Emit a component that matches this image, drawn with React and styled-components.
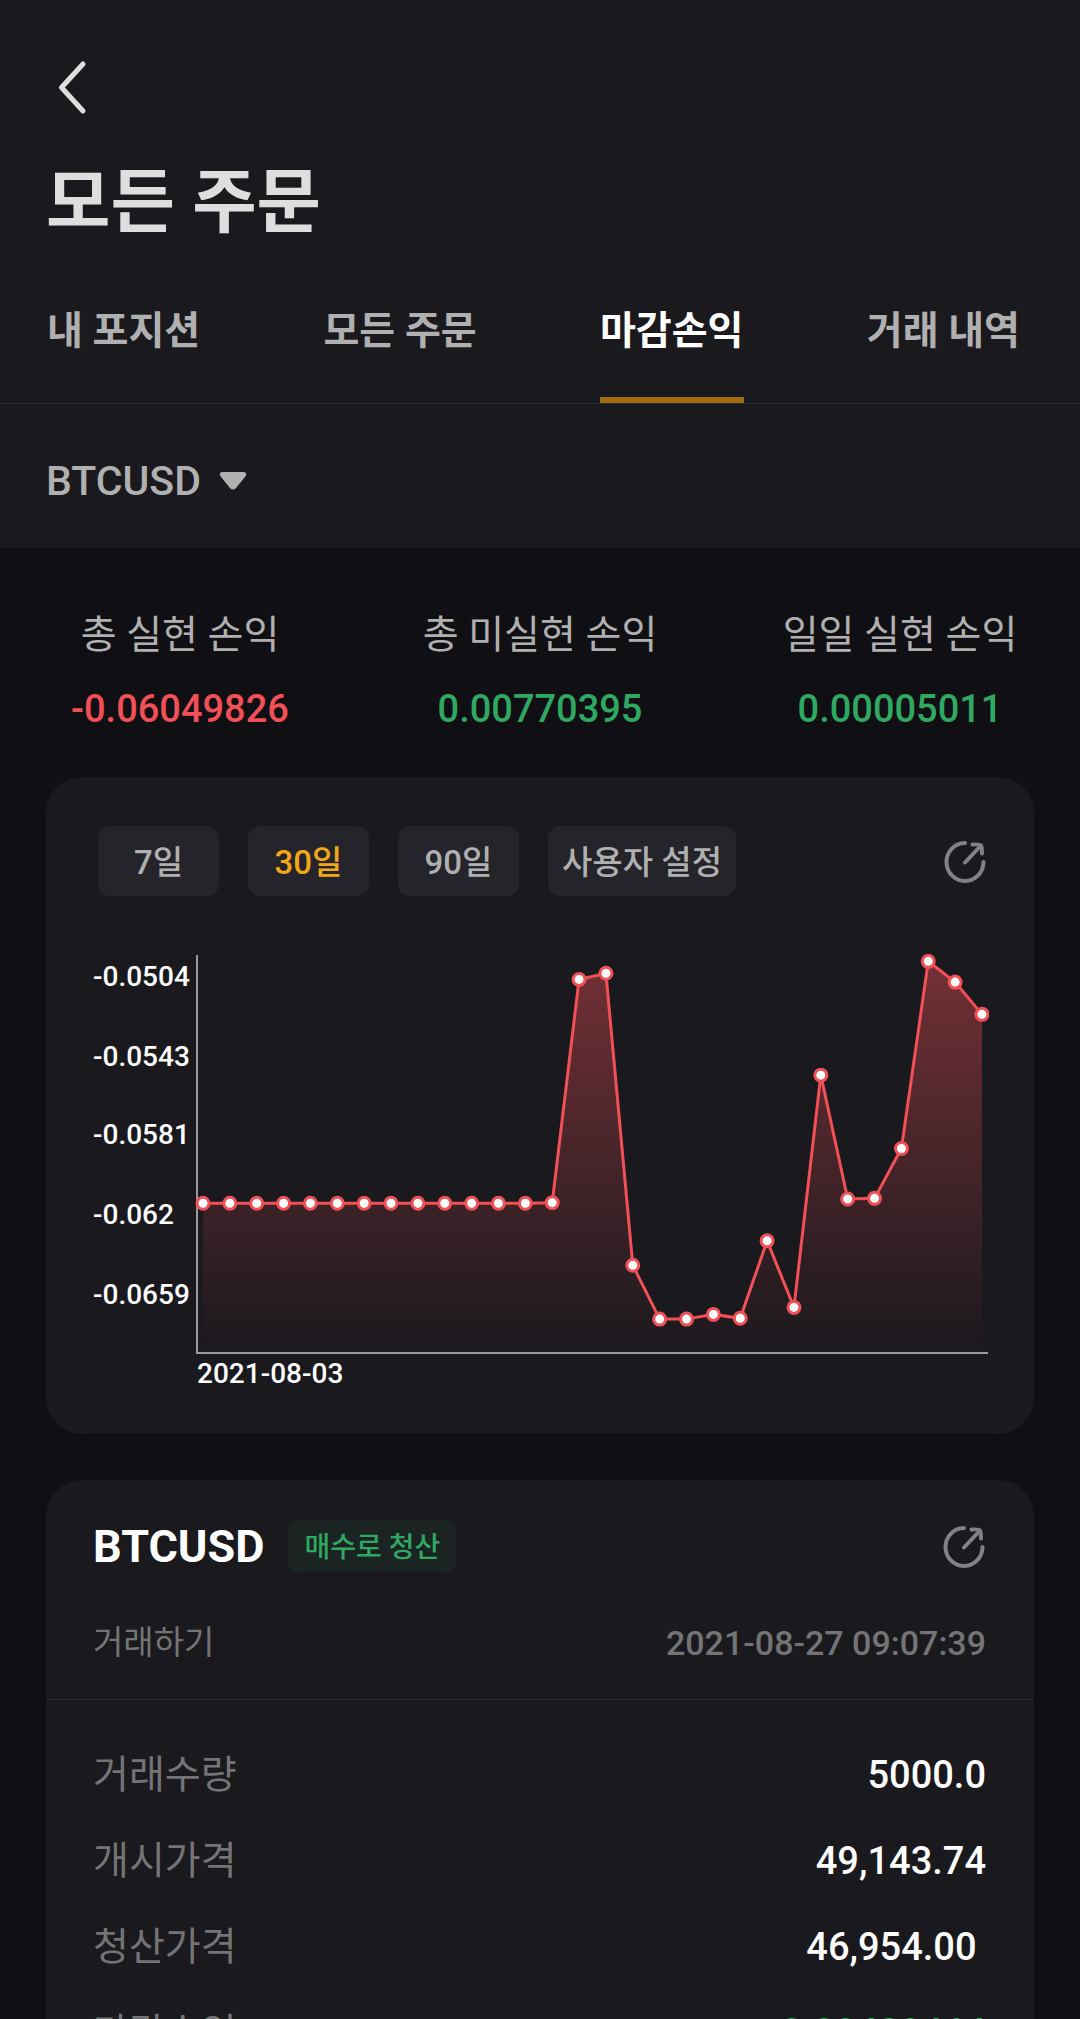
import React, { useState } from "react";
import styled, { createGlobalStyle } from "styled-components";

const Color = {
  page: "#100f14",
  panel: "#1a191e",
  chip: "#25242a",
  line: "#2a292e",
  white: "#ffffff",
  title: "#dedede",
  text: "#b0b0b0",
  muted: "#747476",
  icon: "#828284",
  red: "#f15056",
  green: "#2fa862",
  yellow: "#f0a818",
  gold: "#9f6e12",
};

const GlobalStyle = createGlobalStyle`
  * {
    box-sizing: border-box;
  }
  body {
    margin: 0;
    background: ${Color.page};
    font-family: Roboto, "Noto Sans CJK KR", sans-serif;
  }
  button {
    margin: 0;
    padding: 0;
    border: 0;
    background: none;
    font-family: inherit;
    cursor: pointer;
  }
  h1, h2, p, dl, dt, dd {
    margin: 0;
  }
`;

const Screen = styled.div`
  height: 100vh;
  overflow-y: auto;
  scrollbar-width: none;
`;

const Header = styled.header`
  padding-top: 56px;
  background: ${Color.panel};
`;

const BackBtn = styled.button`
  display: block;
  margin-left: 40px;
  width: 64px;
  height: 64px;
`;

const Title = styled.h1`
  padding: 33px 46px 0;
  font-size: 70px;
  line-height: 100px;
  font-weight: 700;
  color: ${Color.title};
`;

const Tabs = styled.nav`
  display: flex;
  justify-content: space-between;
  margin-top: 47px;
  padding: 0 60px 0 47px;
  border-bottom: 1px solid ${Color.line};
`;

const Tab = styled.button`
  height: 103px;
  padding-bottom: 36px;
  font-size: 39px;
  line-height: 56px;
  font-weight: 700;
  white-space: nowrap;
  color: ${(props) => (props.$on ? Color.white : Color.text)};
  border-bottom: 6px solid ${(props) => (props.$on ? Color.gold : "transparent")};
`;

const SymbolBtn = styled.button`
  display: flex;
  align-items: center;
  gap: 18px;
  width: 100%;
  height: 144px;
  padding: 10px 46px 0;
  font-size: 41px;
  line-height: 56px;
  font-weight: 500;
  color: ${Color.text};
`;

const Stats = styled.dl`
  display: grid;
  grid-template-columns: repeat(3, 1fr);
  padding: 59px 0 40px;
  text-align: center;
`;

const StatLabel = styled.dt`
  font-size: 39px;
  line-height: 56px;
  color: ${Color.text};
`;

const StatValue = styled.dd`
  padding-top: 18px;
  font-size: 38px;
  line-height: 56px;
  font-weight: 500;
  color: ${(props) => (props.$minus ? Color.red : Color.green)};
`;

const Card = styled.section`
  margin: 0 46px 46px;
  border-radius: 36px;
  background: ${Color.panel};
`;

const ChartCard = styled(Card)`
  padding: 49px 45px 44px 47px;
`;

const Periods = styled.div`
  display: flex;
  align-items: center;
  gap: 29px;
  margin-bottom: 54px;
  padding: 0 2px 0 5px;
`;

const PeriodBtn = styled.button`
  min-width: 121px;
  height: 70px;
  padding: 3px 14px 0;
  border-radius: 12px;
  background: ${Color.chip};
  font-size: 33px;
  line-height: 48px;
  font-weight: 500;
  color: ${(props) => (props.$on ? Color.yellow : Color.text)};
`;

const ShareBtn = styled.button`
  width: 44px;
  height: 44px;
  margin-left: auto;
  color: ${Color.icon};

  > svg {
    display: block;
  }
`;

const ChartSvg = styled.svg`
  display: block;
  width: 100%;
  font-size: 28px;
  font-weight: 500;
  fill: ${Color.white};
`;

const TradeHead = styled.div`
  padding: 39px 48px 32px 47px;
  border-bottom: 1px solid ${Color.line};
`;

const Row = styled.div`
  display: flex;
  align-items: center;
  justify-content: space-between;
`;

const Symbol = styled.h2`
  padding-top: 2px;
  font-size: 45px;
  line-height: 52px;
  font-weight: 700;
  color: ${Color.white};
`;

const Tag = styled.span`
  margin-left: 24px;
  padding: 4px 16px 0;
  border-radius: 10px;
  background: #1b2423;
  font-size: 28px;
  line-height: 48px;
  font-weight: 500;
  color: ${Color.green};
`;

const SubRow = styled(Row)`
  margin-top: 46px;
  font-size: 33px;
  line-height: 48px;
  color: ${Color.muted};
`;

const Time = styled.time`
  font-size: 34px;
  font-weight: 500;
`;

const Details = styled.dl`
  padding: 32px 48px 32px 47px;
`;

const DetailRow = styled(Row)`
  height: 86px;
`;

const DetailLabel = styled.dt`
  font-size: 39px;
  line-height: 56px;
  color: ${Color.muted};
`;

const DetailValue = styled.dd`
  font-size: 38px;
  line-height: 56px;
  font-weight: 500;
  white-space: pre;
  color: ${(props) => (props.$plus ? Color.green : Color.white)};
`;

const tabs = ["내 포지션", "모든 주문", "마감손익", "거래 내역"];
const periods = ["7일", "30일", "90일", "사용자 설정"];

const stats = [
  { label: "총 실현 손익", value: "-0.06049826" },
  { label: "총 미실현 손익", value: "0.00770395" },
  { label: "일일 실현 손익", value: "0.00005011" },
];

const details = [
  { label: "거래수량", value: "5000.0" },
  { label: "개시가격", value: "49,143.74" },
  { label: "청산가격", value: "46,954.00 " },
  { label: "마감수익", value: "0.00480464", plus: true },
];

const pnl = [
  ...Array(13).fill(-0.06148),
  -0.06145, -0.05058, -0.05028, -0.0645, -0.06712, -0.06712, -0.06689,
  -0.06708, -0.06331, -0.06655, -0.05524, -0.06127, -0.06124, -0.05881,
  -0.0497, -0.05071, -0.05228,
];
const ticks = [-0.0504, -0.0543, -0.0581, -0.062, -0.0659];

const plot = { left: 104, top: 5, right: 895, bottom: 403 };
const max = -0.04939;
const min = -0.06877;
const getX = (i) => 110 + (i * 779) / (pnl.length - 1);
const getY = (v) =>
  plot.top + ((max - v) / (max - min)) * (plot.bottom - plot.top);

const ShareIcon = () => (
  <svg
    width="44"
    height="44"
    viewBox="0 0 44 44"
    fill="none"
    stroke="currentColor"
    strokeWidth="4"
    strokeLinecap="round"
    strokeLinejoin="round"
  >
    <path d="M22 4A18.5 19 0 1 0 40.500 23" />
    <path d="M22 23.500L37 7.500M29.500 5.500Q37 5 38 6.500Q39 8 39 14.500" />
  </svg>
);

const PnlChart = () => {
  const line = pnl.map((v, i) => `${getX(i)},${getY(v)}`).join(" ");
  return (
    <ChartSvg viewBox="0 0 896 440" role="img" aria-label="마감손익">
      <defs>
        <linearGradient
          id="area"
          gradientUnits="userSpaceOnUse"
          x1="0"
          y1={plot.top}
          x2="0"
          y2={plot.bottom}
        >
          <stop offset="0" stopColor={Color.red} stopOpacity="0.42" />
          <stop offset="1" stopColor={Color.red} stopOpacity="0" />
        </linearGradient>
      </defs>
      {ticks.map((v) => (
        <text key={v} x="0" y={getY(v) + 10}>
          {v}
        </text>
      ))}
      <text x={plot.left} y="433">
        2021-08-03
      </text>
      <polygon
        fill="url(#area)"
        points={`${getX(0)},${plot.bottom} ${line} ${getX(pnl.length - 1)},${plot.bottom}`}
      />
      <path
        d={`M${plot.left} ${plot.top}V${plot.bottom}H${plot.right}`}
        fill="none"
        stroke="#9a9a9c"
        strokeWidth="2"
      />
      <polyline fill="none" stroke={Color.red} strokeWidth="3" points={line} />
      {pnl.map((v, i) => (
        <circle
          key={i}
          cx={getX(i)}
          cy={getY(v)}
          r="6"
          stroke={Color.red}
          strokeWidth="3"
        />
      ))}
    </ChartSvg>
  );
};

const App = () => {
  const [tab, setTab] = useState(2);
  const [period, setPeriod] = useState(1);

  return (
    <Screen>
      <GlobalStyle />
      <Header>
        <BackBtn aria-label="뒤로">
          <svg
            width="64"
            height="64"
            fill="none"
            stroke={Color.title}
            strokeWidth="5"
            strokeLinecap="round"
            strokeLinejoin="round"
          >
            <path d="M43 8L21.500 31.500L43 55" />
          </svg>
        </BackBtn>
        <Title>모든 주문</Title>
        <Tabs>
          {tabs.map((name, i) => (
            <Tab key={name} $on={tab === i} onClick={() => setTab(i)}>
              {name}
            </Tab>
          ))}
        </Tabs>
        <SymbolBtn>
          BTCUSD
          <svg width="28" height="20" fill="currentColor">
            <path d="M3 1H25Q29 2 26 6L17 17Q14 20 11 17L2 6Q-1 2 3 1Z" />
          </svg>
        </SymbolBtn>
      </Header>

      <Stats>
        {stats.map((s) => (
          <div key={s.label}>
            <StatLabel>{s.label}</StatLabel>
            <StatValue $minus={s.value.startsWith("-")}>{s.value}</StatValue>
          </div>
        ))}
      </Stats>

      <ChartCard>
        <Periods>
          {periods.map((name, i) => (
            <PeriodBtn
              key={name}
              $on={period === i}
              onClick={() => setPeriod(i)}
            >
              {name}
            </PeriodBtn>
          ))}
          <ShareBtn aria-label="공유">
            <ShareIcon />
          </ShareBtn>
        </Periods>
        <PnlChart />
      </ChartCard>

      <Card>
        <TradeHead>
          <Row>
            <Symbol>BTCUSD</Symbol>
            <Tag>매수로 청산</Tag>
            <ShareBtn aria-label="공유">
              <ShareIcon />
            </ShareBtn>
          </Row>
          <SubRow>
            <p>거래하기</p>
            <Time>2021-08-27 09:07:39</Time>
          </SubRow>
        </TradeHead>
        <Details>
          {details.map((d) => (
            <DetailRow key={d.label}>
              <DetailLabel>{d.label}</DetailLabel>
              <DetailValue $plus={d.plus}>{d.value}</DetailValue>
            </DetailRow>
          ))}
        </Details>
      </Card>
    </Screen>
  );
};

export default App;
